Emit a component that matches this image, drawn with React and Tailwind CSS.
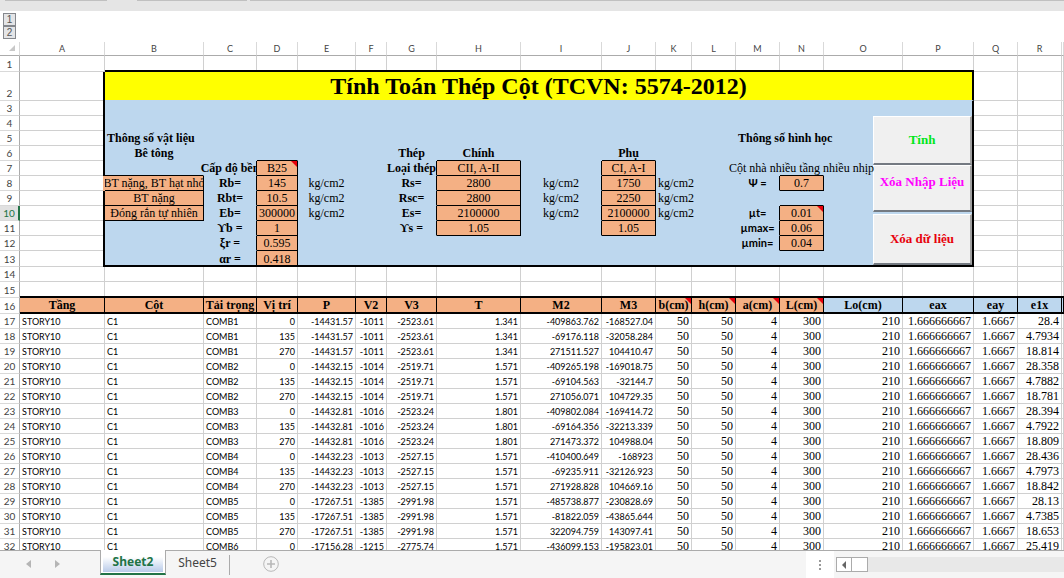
import React, { useState } from "react";
import clsx from "clsx";

const columns = [
  { id: "A", width: "w-[85px]" },
  { id: "B", width: "w-[99px]" },
  { id: "C", width: "w-[53px]" },
  { id: "D", width: "w-[41px]" },
  { id: "E", width: "w-[58px]" },
  { id: "F", width: "w-[31px]" },
  { id: "G", width: "w-[50px]" },
  { id: "H", width: "w-[84px]" },
  { id: "I", width: "w-[81px]" },
  { id: "J", width: "w-[54px]" },
  { id: "K", width: "w-[36px]" },
  { id: "L", width: "w-[44px]" },
  { id: "M", width: "w-[44px]" },
  { id: "N", width: "w-[44px]" },
  { id: "O", width: "w-[79px]" },
  { id: "P", width: "w-[71px]" },
  { id: "Q", width: "w-[44px]" },
  { id: "R", width: "w-[44px]" },
  { id: "S", width: "" },
];
const letters = columns.map((c) => c.id);

// bordered orange cells of the input panel
const inputs = {
  D7: "B25", D8: "145", D9: "10.5", D10: "300000", D11: "1", D12: "0.595", D13: "0.418",
  B8: "BT nặng, BT hạt nhỏ", B9: "BT nặng", B10: "Đóng rắn tự nhiên",
  H7: "CII, A-II", H8: "2800", H9: "2800", H10: "2100000", H11: "1.05",
  J7: "CI, A-I", J8: "1750", J9: "2250", J10: "2100000", J11: "1.05",
  N8: "0.7", N10: "0.01", N11: "0.06", N12: "0.04",
};

const boldLabels = {
  B6: "Bê tông",
  C8: "Rb=", C9: "Rbt=", C10: "Eb=", C11: "ϒb =", C12: "ξr =", C13: "αr =",
  G6: "Thép", G7: "Loại thép", G8: "Rs=", G9: "Rsc=", G10: "Es=", G11: "ϒs =",
  H6: "Chính", J6: "Phụ",
};

const sansLabels = { M8: "Ψ =", M10: "µt=", M11: "µmax=", M12: "µmin=" };

const leftLabels = { B5: "Thông số vật liệu", M5: "Thông số hình học" };

const units = ["E8", "E9", "E10", "I8", "I9", "I10", "K8", "K9", "K10"];

const comments = ["D7", "N10", "K16", "L16", "M16", "N16"];

const headers = [
  "Tầng", "Cột", "Tải trọng", "Vị trí", "P", "V2", "V3", "T", "M2", "M3",
  "b(cm)", "h(cm)", "a(cm)", "L(cm)", "Lo(cm)", "eax", "eay", "e1x", "",
];

const combos = [
  { name: "COMB1", p: "-14431.57", v2: "-1011", v3: "-2523.61", t: "1.341", rows: [["-409863.762", "-168527.04", "28.4"], ["-69176.118", "-32058.284", "4.7934"], ["271511.527", "104410.47", "18.814"]] },
  { name: "COMB2", p: "-14432.15", v2: "-1014", v3: "-2519.71", t: "1.571", rows: [["-409265.198", "-169018.75", "28.358"], ["-69104.563", "-32144.7", "4.7882"], ["271056.071", "104729.35", "18.781"]] },
  { name: "COMB3", p: "-14432.81", v2: "-1016", v3: "-2523.24", t: "1.801", rows: [["-409802.084", "-169414.72", "28.394"], ["-69164.356", "-32213.339", "4.7922"], ["271473.372", "104988.04", "18.809"]] },
  { name: "COMB4", p: "-14432.23", v2: "-1013", v3: "-2527.15", t: "1.571", rows: [["-410400.649", "-168923", "28.436"], ["-69235.911", "-32126.923", "4.7973"], ["271928.828", "104669.16", "18.842"]] },
  { name: "COMB5", p: "-17267.51", v2: "-1385", v3: "-2991.98", t: "1.571", rows: [["-485738.877", "-230828.69", "28.13"], ["-81822.059", "-43865.644", "4.7385"], ["322094.759", "143097.41", "18.653"]] },
  { name: "COMB6", p: "-17156.28", v2: "-1215", v3: "-2775.74", t: "1.571", rows: [["-436099.153", "-195823.01", "25.419"]] },
];

const stations = ["0", "135", "270"];

const data = combos.flatMap((c) =>
  c.rows.map(([m2, m3, e1x], i) => [
    "STORY10", "C1", c.name, stations[i], c.p, c.v2, c.v3, c.t, m2, m3,
    "50", "50", "4", "300", "210", "1.666666667", "1.6667", e1x, "",
  ])
);

const serif = "font-['Liberation_Serif',serif]";
const sans = "font-['Lato',sans-serif]";

// thick frame lines run over the thin cell borders so the corners stay solid
const thickBottom = "relative border-b border-b-black after:absolute after:-right-px after:-bottom-px after:left-0 after:h-0.5 after:bg-black";
const thickRight = "relative border-r border-r-black after:absolute after:top-0 after:-right-px after:-bottom-px after:w-0.5";

function CommentMark() {
  return <span className="absolute right-0 top-0 size-[6px] bg-red-600 [clip-path:polygon(0_0,100%_0,100%_100%)]" />;
}

function RowHeader({ n }) {
  const active = n === 10;
  return (
    <th
      scope="row"
      className={clsx(
        "border-b border-b-[#d9d9d9] p-0 text-center align-bottom text-[10px] leading-[14px] font-normal",
        active ? "border-r-2 border-r-[#217346] bg-[#e1e1e1] text-[#217346]" : "border-r border-r-[#ababab] text-[#444]"
      )}
    >
      {n}
    </th>
  );
}

function PlainRow({ n, height, cellClass }) {
  return (
    <tr className={height}>
      <RowHeader n={n} />
      {letters.map((l) => (
        <td key={l} className={clsx("border-r border-r-[#d0d0d0] p-0", cellClass(l))} />
      ))}
    </tr>
  );
}

function PanelCell({ col, row }) {
  const id = letters[col] + row;
  const right = letters[col + 1] + row;
  const below = letters[col] + (row + 1);
  const isInput = id in inputs;
  const hasComment = comments.includes(id);
  const last = row === 13;

  let content = null;
  if (isInput) {
    content = <div className="flex justify-center overflow-hidden whitespace-nowrap">{inputs[id]}</div>;
  } else if (boldLabels[id]) {
    content = <div className="flex justify-center font-bold whitespace-nowrap">{boldLabels[id]}</div>;
  } else if (sansLabels[id]) {
    content = <div className={clsx("text-center text-[11px] font-bold whitespace-nowrap", sans)}>{sansLabels[id]}</div>;
  } else if (leftLabels[id]) {
    content = <div className="pl-0.5 font-bold whitespace-nowrap">{leftLabels[id]}</div>;
  } else if (id === "C7") {
    content = <div className="flex justify-center font-bold whitespace-nowrap [clip-path:inset(-4px_0_-4px_-16px)]">Cấp độ bền</div>;
  } else if (id === "N7") {
    content = <div className="flex justify-center whitespace-nowrap">Cột nhà nhiều tầng nhiều nhịp</div>;
  } else if (units.includes(id)) {
    content = <div className={clsx("whitespace-nowrap", id[0] === "K" ? "pl-0.5" : "text-center")}>kg/cm2</div>;
  }

  return (
    <td
      className={clsx(
        "border-r p-0 align-bottom text-xs leading-[14px]",
        serif,
        hasComment && "relative",
        isInput ? "bg-[#f4b084]" : "bg-[#bdd7ee]",
        isInput || right in inputs ? "border-r-black" : "border-r-transparent",
        last ? thickBottom : "border-b",
        !last && (isInput || below in inputs ? "border-b-black" : "border-b-transparent")
      )}
    >
      {content}
      {hasComment && <CommentMark />}
    </td>
  );
}

function MacroButton({ className, children }) {
  return (
    <button
      type="button"
      className={clsx(
        "w-[99px] border-t border-l border-r-2 border-b-2 border-t-white border-l-white border-r-[#a0a0a0] border-b-[#747a82] bg-[#f0f0f0] text-[13px] leading-4 font-bold whitespace-nowrap",
        className
      )}
    >
      {children}
    </button>
  );
}

function OuterCells({ from }) {
  return letters.slice(from).map((l) => <td key={l} className="border-r border-b border-[#d0d0d0] p-0" />);
}

function PanelRow({ row }) {
  const hasButtons = row >= 4;
  return (
    <tr className={row === 13 ? "h-4" : "h-[15px]"}>
      <RowHeader n={row} />
      <td className={clsx("border-b border-b-[#d0d0d0] p-0", thickRight, row === 8 ? "border-r-[#f4b084] after:bg-[#f4b084]" : "after:bg-black")} />
      {letters.slice(1, 14).map((l, i) => (
        <PanelCell key={l} col={i + 1} row={row} />
      ))}
      {!hasButtons && <td colSpan={2} className="border-r-2 border-r-black bg-[#bdd7ee] p-0" />}
      {row === 4 && (
        <td colSpan={2} rowSpan={10} className={clsx("border-r-2 border-b-2 border-black bg-[#bdd7ee] p-0 align-top", serif)}>
          <div className="flex flex-col items-end">
            <MacroButton className="h-[49px] text-[#00e61a]">Tính</MacroButton>
            <MacroButton className="mb-0.5 h-[47px] pb-3 text-[#f0f]">Xóa Nhập Liệu</MacroButton>
            <MacroButton className="h-[51px] text-red-600">Xóa dữ liệu</MacroButton>
          </div>
        </td>
      )}
      <OuterCells from={16} />
    </tr>
  );
}

function DataRow({ n, values }) {
  return (
    <tr className="h-[15px]">
      <RowHeader n={n} />
      {values.map((v, i) => (
        <td
          key={letters[i]}
          className={clsx(
            "border-r border-b border-[#d0d0d0] px-0.5 py-0 align-bottom whitespace-nowrap text-black",
            i < 10 ? "text-[9px] leading-3" : "text-xs leading-[14px]",
            i < 10 ? sans : serif,
            i < 3 ? "text-left" : "text-right"
          )}
        >
          {v}
        </td>
      ))}
    </tr>
  );
}

function Sheet() {
  return (
    <table className="w-full table-fixed border-separate border-spacing-0">
      <colgroup>
        <col className="w-5" />
        {columns.map((c) => (
          <col key={c.id} className={c.width} />
        ))}
      </colgroup>
      <thead>
        <tr className="h-[14px]">
          <th className="border-r border-b border-r-[#d9d9d9] border-b-[#ababab] p-0 pr-1 align-bottom">
            <div className="mb-1 ml-auto size-[6px] bg-[#c8c8c8] [clip-path:polygon(100%_0,100%_100%,0_100%)]" />
          </th>
          {letters.map((l) => (
            <th
              key={l}
              scope="col"
              className="overflow-hidden border-r border-b border-r-[#d9d9d9] border-b-[#ababab] p-0 text-center text-[9px] leading-[13px] font-normal text-[#444]"
            >
              {l === "S" ? "" : l}
            </th>
          ))}
        </tr>
      </thead>
      <tbody>
        <PlainRow n={1} height="h-4" cellClass={(l) => (l >= "B" && l <= "P" ? thickBottom : "border-b border-b-[#d0d0d0]")} />
        <tr className="h-[29px]">
          <RowHeader n={2} />
          <td className={clsx("border-b border-b-[#d0d0d0] p-0 after:bg-black", thickRight)} />
          <td
            colSpan={15}
            className={clsx("border-r-2 border-b border-r-black border-b-[#bdd7ee] bg-[#ff0] p-0 text-center align-bottom text-2xl leading-[27px] font-bold whitespace-nowrap", serif)}
          >
            Tính Toán Thép Cột (TCVN: 5574-2012)
          </td>
          <OuterCells from={16} />
        </tr>
        {[3, 4, 5, 6, 7, 8, 9, 10, 11, 12, 13].map((row) => (
          <PanelRow key={row} row={row} />
        ))}
        <PlainRow n={14} height="h-[15px]" cellClass={() => "border-b border-b-[#d0d0d0]"} />
        <PlainRow n={15} height="h-4" cellClass={() => thickBottom} />
        <tr className="h-4">
          <RowHeader n={16} />
          {headers.map((h, i) => (
            <th
              key={letters[i]}
              scope="col"
              className={clsx(
                "relative border-r border-b-2 border-black p-0 text-center align-bottom text-xs leading-[14px] font-bold whitespace-nowrap",
                serif,
                i < 14 ? "bg-[#f4b084]" : "bg-[#bdd7ee]"
              )}
            >
              {h}
              {comments.includes(letters[i] + 16) && <CommentMark />}
            </th>
          ))}
        </tr>
        {data.map((values, i) => (
          <DataRow key={i} n={17 + i} values={values} />
        ))}
      </tbody>
    </table>
  );
}

function SheetTabs() {
  const [active, setActive] = useState("Sheet2");
  return (
    <footer className="flex h-[28px] shrink-0 items-start border-t border-[#ababab] bg-[#f5f5f5] font-['Noto_Sans',sans-serif]">
      <div className="flex h-[25px] w-[100px] items-center gap-6 pl-[26px]">
        <button type="button" aria-label="Previous sheet">
          <svg width="5" height="8" viewBox="0 0 5 8" fill="#b5b5b5"><path d="M5 0v8L0 4z" /></svg>
        </button>
        <button type="button" aria-label="Next sheet">
          <svg width="5" height="8" viewBox="0 0 5 8" fill="#b5b5b5"><path d="M0 0v8l5-4z" /></svg>
        </button>
      </div>
      {["Sheet2", "Sheet5"].map((name) => (
        <button
          key={name}
          type="button"
          onClick={() => setActive(name)}
          className={clsx(
            "-mt-px h-[25px] text-xs leading-[23px]",
            active === name
              ? "w-[66px] border-x border-b-2 border-x-[#ababab] border-b-[#217346] bg-linear-to-b from-white from-30% to-[#b4c7e7] font-bold text-[#217346] shadow-[inset_2px_-1px_0_white,inset_-2px_0_0_white]"
              : "w-[63px] text-[#444]"
          )}
        >
          {name}
        </button>
      ))}
      <div className="mt-1 mr-[33px] h-5 w-px bg-[#ababab]" />
      <button type="button" aria-label="New sheet" className="mt-[5px]">
        <svg width="16" height="16" viewBox="0 0 16 16" fill="none" stroke="#b8b8b8">
          <circle cx="8" cy="8" r="7.3" />
          <path d="M8 4v8M4 8h8" strokeWidth="1.6" />
        </svg>
      </button>
      <div className="ml-auto flex h-full w-7 items-center justify-center bg-white">
        <svg width="2" height="10" viewBox="0 0 2 10" fill="#999"><path d="M0 0h2v2H0zM0 4h2v2H0zM0 8h2v2H0z" /></svg>
      </div>
      <div className="mt-1.5 ml-0.5 flex h-[15px] w-[228px] bg-[#e8e8e8]">
        <button type="button" aria-label="Scroll left" className="flex w-4 items-center justify-center border border-[#ababab] bg-white">
          <svg width="4" height="8" viewBox="0 0 4 8" fill="#666"><path d="M4 0v8L0 4z" /></svg>
        </button>
        <div className="-ml-px w-[17px] border border-[#ababab] bg-white" />
      </div>
    </footer>
  );
}

export default function App() {
  return (
    <div className={clsx("flex h-screen flex-col overflow-hidden bg-white text-black", sans)}>
      <div className="flex h-[11px] shrink-0 items-start bg-[#e5e5e5]">
        <div className="ml-[5px] h-px w-[102px] bg-[#c0c0c0]" />
        <div className="ml-[30px] h-px w-[110px] bg-[#c0c0c0]" />
        <div className="ml-[3px] h-px flex-1 bg-[#c0c0c0]" />
      </div>
      <div className="flex h-[31px] shrink-0 flex-col pt-0.5 pl-[3px] font-['Liberation_Sans',sans-serif]">
        {[1, 2].map((level) => (
          <button key={level} type="button" className="h-[13px] w-[13px] border border-[#85888d] bg-[#e4e5e7] text-[10px] leading-[11px] text-[#555]">
            {level}
          </button>
        ))}
      </div>
      <main className="min-h-0 flex-1 overflow-hidden">
        <Sheet />
      </main>
      <SheetTabs />
    </div>
  );
}
